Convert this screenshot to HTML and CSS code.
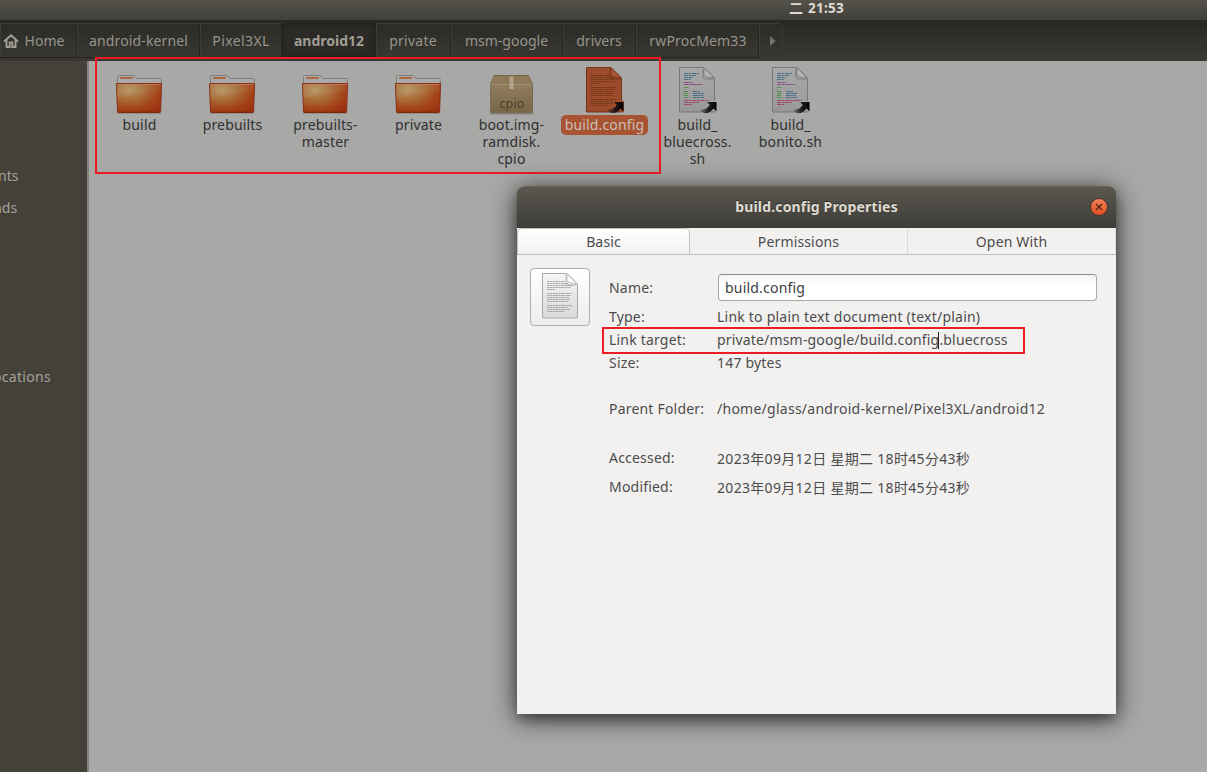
FILE: index.html
```
<!DOCTYPE html>
<html lang="en">
<head>
<meta charset="utf-8">
<title>build.config Properties</title>
<link rel="stylesheet" href="styles.css">
</head>
<body>
<svg class="defs" aria-hidden="true">
  <defs>
    <radialGradient id="orange" cx=".28" cy=".22" r=".95">
      <stop offset="0" stop-color="#b5925f"/><stop offset=".35" stop-color="#a96e3a"/>
      <stop offset=".7" stop-color="#a44318"/><stop offset="1" stop-color="#9b3010"/>
    </radialGradient>
    <linearGradient id="box" x1="0" y1="0" x2="0" y2="1">
      <stop offset="0" stop-color="#968464"/><stop offset="1" stop-color="#796747"/>
    </linearGradient>
    <linearGradient id="paper" x1="0" y1="0" x2="0" y2="1">
      <stop offset="0" stop-color="#aaa"/><stop offset="1" stop-color="#989898"/>
    </linearGradient>
    <linearGradient id="sheet" x1="0" y1="0" x2="0" y2="1">
      <stop offset="0" stop-color="#f6f6f6"/><stop offset="1" stop-color="#d9d9d9"/>
    </linearGradient>
    <linearGradient id="arrow" x1="0" y1="0" x2="1" y2="0">
      <stop offset="0" stop-color="#222" stop-opacity=".25"/><stop offset=".5" stop-color="#111" stop-opacity=".9"/><stop offset="1" stop-color="#000"/>
    </linearGradient>
    <symbol id="folder" viewBox="0 0 48 48">
      <path d="M2 46.500h44" stroke="#777" stroke-opacity=".5"/>
      <path d="M2.500 18V9.500q0-1 1-1H18.500q1 0 1.600.9l2 2.100H45.500q.8 0 .8.8V18z" fill="#aaa" stroke="#7d7d7d"/>
      <rect x="5" y="10" width="13" height="2" rx=".8" fill="#ad6842"/>
      <path d="M1.500 16.500h45l-.9 28.200q0 .8-.8.8H3.300q-.8 0-.8-.8z" fill="url(#orange)" stroke="#8b2c14"/>
      <path d="M2.500 17.500h43" stroke="#bd8465" stroke-opacity=".7"/>
      <path d="M2 17h44l-.2 7Q24 25 2.400 32z" fill="#fff" fill-opacity=".06"/>
      <path d="M3 45.200h42" stroke="#832209"/>
    </symbol>
    <symbol id="package" viewBox="0 0 48 48">
      <path d="M2.500 46.500h44" stroke="#777" stroke-opacity=".6" stroke-width="2"/>
      <path d="M7 8.500h34.500l4 8.500v28q0 .8-.8.8H4.500q-.8 0-.8-.8V17z" fill="url(#box)" stroke="#75684f"/>
      <path d="M7.300 9h33.900l3.600 7.800H4.200z" fill="#8c7a58"/>
      <path d="M4.200 17.500h40.500" stroke="#a6977a" stroke-opacity=".7"/>
      <path d="M22.500 9.500h4v12.500h-4z" fill="#b8ac93" fill-opacity=".85"/>
      <text x="25" y="41" text-anchor="middle" class="package-text">cpio</text>
    </symbol>
    <symbol id="link" viewBox="0 0 17 13">
      <path d="M7 1h9.500v9.500l-3-3Q9.500 12.500 5 12.300 1.500 11.500 0 8.500 6 9.500 9.800 4z" fill="url(#arrow)"/>
    </symbol>
    <symbol id="script" viewBox="0 0 48 48">
      <path d="M6.500.5h24.500l10.500 10.500v34H6.500z" fill="url(#paper)" stroke="#777"/>
      <g fill="none" stroke-width="1" stroke-dasharray="4 .5 3 .5">
        <path stroke="#486f87" d="M11 6.500h15M11 8.500h12M11 10.500h9M11 12.500h7M20 24.500h7M20 26.500h11M20 28.500h10M20 30.500h11"/>
        <path stroke="#875081" d="M11 15.500h9M11 17.500h18"/>
        <path stroke="#568c4d" d="M11 20.500h5M11 22.500h1M11 24.500h4M11 26.500h5M11 28.500h4M11 30.500h5"/>
        <path stroke="#9b4967" d="M11 33.500h25M11 35.500h15M11 37.500h8"/>
      </g>
      <path d="M31 1v6q0 2.500 4 3l6 1z" fill="#b7b7b7" stroke="#777" stroke-width=".7"/>
      <path d="M30 2v7q0 3 5 3h5" fill="none" stroke="#555" stroke-opacity=".3" stroke-width="2"/>
      <path d="M33 34h11v12l-4-3z" fill="#aaa"/>
      <use href="#link" x="27" y="34" width="17" height="13"/>
    </symbol>
    <symbol id="textfile" viewBox="0 0 48 48">
      <path d="M6.500.5h24.500l10.500 10.500v34H6.500z" fill="#9c4b2b" stroke="#713319"/>
      <path d="M11 8.500h21M11 10.500h23M11 12.500h23M11 14.500h24M11 16.500h8M11 20.500h25M11 22.500h24M11 24.500h22M11 26.500h23M11 28.500h21M11 32.500h25M11 34.500h24M11 36.500h22M11 38.500h17" stroke="#773619" stroke-dasharray="2 .4 3 .4"/>
      <path d="M31 1v6q0 2.500 4 3l6 1z" fill="#ad5734" stroke="#773619" stroke-width=".7"/>
      <path d="M30 2v7q0 3 5 3h5" fill="none" stroke="#642a13" stroke-opacity=".4" stroke-width="2"/>
      <path d="M33 34h11v12l-4-3z" fill="#a84e2c"/>
      <use href="#link" x="27" y="34" width="17" height="13"/>
    </symbol>
    <symbol id="document" viewBox="0 0 48 48">
      <path d="M6.500.5h24.500l10.500 10.500v34H6.500z" fill="url(#sheet)" stroke="#aaa"/>
      <path d="M11 8.500h18M11 10.500h21M11 12.500h25M11 14.500h24M11 16.500h8M11 20.500h25M11 22.500h24M11 24.500h22M11 26.500h23M11 28.500h21M11 32.500h25M11 34.500h21M11 36.500h23M11 38.500h17" stroke="#aaa" stroke-dasharray="2 .4 3 .4"/>
      <path d="M31 1v6q0 2.500 4 3l6 1z" fill="#fff" stroke="#aaa" stroke-width=".7"/>
      <path d="M30 2v7q0 3 5 3h5" fill="none" stroke="#777" stroke-opacity=".25" stroke-width="2"/>
    </symbol>
  </defs>
</svg>

<div class="desktop">
  <header class="panel"><span class="clock"><span class="weekday">二</span><span class="time">21:53</span></span></header>

  <nav class="toolbar">
    <a class="crumb home">
      <svg width="16" height="14" viewBox="0 0 16 14"><path d="M1 7.500 8 1.300l7 6.200M3.500 6v7h3.200V8.500h2.600V13h3.200V6" fill="none" stroke="#a3a097" stroke-width="1.900"/></svg>
      <span>Home</span>
    </a>
    <a class="crumb kernel">android-kernel</a>
    <a class="crumb pixel">Pixel3XL</a>
    <a class="crumb current">android12</a>
    <a class="crumb private">private</a>
    <a class="crumb msm">msm-google</a>
    <a class="crumb drivers">drivers</a>
    <a class="crumb procmem">rwProcMem33</a>
    <a class="crumb next"><svg width="6" height="10" viewBox="0 0 6 10"><path d="M0 0l5.500 5L0 10z" fill="#77756f"/></svg></a>
  </nav>

  <div class="body">
    <aside class="sidebar">
      <div class="place documents">nts</div>
      <div class="place downloads">ads</div>
      <div class="place locations">ocations</div>
    </aside>
    <main class="files">
      <div class="file"><svg class="icon"><use href="#folder"/></svg><span class="label">build</span></div>
      <div class="file"><svg class="icon"><use href="#folder"/></svg><span class="label">prebuilts</span></div>
      <div class="file"><svg class="icon"><use href="#folder"/></svg><span class="label">prebuilts-<br>master</span></div>
      <div class="file"><svg class="icon"><use href="#folder"/></svg><span class="label">private</span></div>
      <div class="file"><svg class="icon"><use href="#package"/></svg><span class="label">boot.img-<br>ramdisk.<br>cpio</span></div>
      <div class="file selected"><svg class="icon"><use href="#textfile"/></svg><span class="label">build.config</span></div>
      <div class="file"><svg class="icon"><use href="#script"/></svg><span class="label">build_<br>bluecross.<br>sh</span></div>
      <div class="file"><svg class="icon"><use href="#script"/></svg><span class="label">build_<br>bonito.sh</span></div>
    </main>
  </div>

  <div class="mark mark-files"></div>

  <section class="dialog">
    <header class="titlebar">
      <h1 class="title">build.config Properties</h1>
      <button class="close" aria-label="Close"><svg width="8" height="8" viewBox="0 0 8 8"><path d="M1 1l6 6M7 1 1 7" stroke="#4c2417" stroke-width="1.300"/></svg></button>
    </header>
    <div class="tabs">
      <div class="tab active">Basic</div>
      <div class="tab permissions">Permissions</div>
      <div class="tab openwith">Open With</div>
    </div>
    <div class="content">
      <button class="preview" aria-label="Icon"><svg class="icon"><use href="#document"/></svg></button>
      <dl class="props">
        <dt class="name">Name:</dt><dd class="entry">build.config</dd>
        <dt class="type">Type:</dt><dd class="type type-value">Link to plain text document (text/plain)</dd>
        <dt class="target">Link target:</dt><dd class="target-value"><span>private/msm-google/build.config<i class="caret"></i>.bluecross</span></dd>
        <dt class="size">Size:</dt><dd class="size-value">147 bytes</dd>
        <dt class="parent">Parent Folder:</dt><dd class="parent parent-value">/home/glass/android-kernel/Pixel3XL/android12</dd>
        <dt class="accessed">Accessed:</dt><dd class="accessed date">2023年09月12日 星期二 18时45分43秒</dd>
        <dt class="modified">Modified:</dt><dd class="modified date">2023年09月12日 星期二 18时45分43秒</dd>
      </dl>
    </div>
    <div class="mark mark-target"></div>
  </section>
</div>
</body>
</html>
```
FILE: styles.css
```
* { box-sizing: border-box; }
body {
  margin: 0;
  overflow: hidden;
  font: 14px/17px "Noto Sans", "Noto Sans CJK SC", sans-serif;
  color: #4c4c4c;
}
button { padding: 0; }
.defs { position: absolute; width: 0; height: 0; }
.desktop {
  position: relative;
  display: flex;
  flex-direction: column;
  width: 1207px;
  height: 772px;
  overflow: hidden;
}

/* Top panel */
.panel {
  height: 20px;
  padding-left: 789px;
  background: linear-gradient(#55524a, #403f3a);
}
.clock {
  display: flex;
  align-items: center;
  gap: 5px;
  height: 16px;
  color: #dfdbd2;
  font-weight: 700;
}
.weekday { font-size: 14px; line-height: 14px; }
.time { font-size: 13.500px; letter-spacing: .25px; }

/* Path bar */
.toolbar {
  display: flex;
  height: 41px;
  padding: 3px 0 3px;
  background: linear-gradient(#272822, #3a3833);
  border-bottom: 2px solid #3a3833;
}
.crumb {
  display: flex;
  align-items: center;
  justify-content: center;
  height: 35px;
  border-top: 1px solid #393b34;
  border-bottom: 1px solid #24231f;
  border-right: 1px solid #242520;
  box-shadow: inset 1px 0 #3d3d38;
  background: linear-gradient(#2b2c27, #393732);
  color: #98958c;
}
.home { width: 77px; gap: 6px; padding-right: 9px; }
.kernel { width: 123px; padding-left: 1px; letter-spacing: .14px; }
.pixel { width: 82px; padding-left: 1px; letter-spacing: .4px; }
.current {
  width: 94px;
  padding-left: 1px;
  background: #2c2a26;
  border-color: #22231e;
  box-shadow: inset 0 0 4px #1d1d19;
  font-weight: 700;
  color: #a19e95;
}
.private { width: 75px; letter-spacing: .25px; }
.msm { width: 112px; }
.drivers { width: 73px; }
.procmem { width: 123px; padding-left: 2px; letter-spacing: .15px; }
.next { width: 24px; border-color: #3b3a35; border-radius: 0 5px 5px 0; }
.next svg { margin-left: 4px; }

/* Window body */
.body { display: flex; flex: 1; }
.sidebar {
  width: 89px;
  padding-top: 98px;
  background: #44403a;
  border-right: 2px solid #85837f;
  color: #a5a298;
}
.place { height: 32px; line-height: 34px; }
.documents { text-indent: -2px; }
.downloads { text-indent: -6px; }
.locations { margin-top: 137px; text-indent: -7px; letter-spacing: .3px; }
.files {
  display: flex;
  flex: 1;
  align-items: flex-start;
  padding: 6px 0 0 4px;
  background: #a8a8a6;
}
.file {
  display: flex;
  flex: none;
  flex-direction: column;
  align-items: center;
  width: 93px;
  text-align: center;
  color: #303030;
  letter-spacing: .15px;
}
.icon { width: 48px; height: 48px; }
.file .icon { margin-right: 2px; }
.package-text { font: 12.500px "Noto Sans", sans-serif; fill: #4b402c; }
.label { padding: 1px 4px 2px; border-radius: 5px; }
.selected .label { background: #a85331; color: #c9c0b8; }

/* Red annotation frames */
.mark { position: absolute; border: 2px solid #ed1c24; }
.mark-files { left: 95px; top: 57px; width: 566px; height: 117px; }
.mark-target { left: 85px; top: 141px; width: 423px; height: 27px; }

/* Properties dialog */
.dialog {
  position: absolute;
  left: 517px;
  top: 186px;
  width: 599px;
  height: 528px;
  border-radius: 7px 7px 0 0;
  background: #f2f1f0;
  box-shadow: 0 4px 28px rgba(0, 0, 0, .65), 0 5px 12px rgba(0, 0, 0, .35);
}
.titlebar {
  display: grid;
  grid-template-columns: 1fr auto;
  align-items: center;
  height: 42px;
  padding: 0 8px 1px 26px;
  border-radius: 7px 7px 0 0;
  border-top: 1px solid #65625a;
  background: linear-gradient(#5a574e, #3e3d39);
}
.title {
  margin: 0 0 2px;
  text-align: center;
  font-size: 14px;
  font-weight: 700;
  letter-spacing: .17px;
  color: #dfdbd2;
  text-shadow: 0 -1px #2c2b28;
}
.close {
  display: grid;
  place-items: center;
  width: 18px;
  height: 18px;
  border: 1px solid #49362e;
  border-radius: 50%;
  background: linear-gradient(#f58056, #df4f22);
}
.tabs { display: flex; height: 27px; border-bottom: 1px solid #bebdbb; }
.tab { text-align: center; line-height: 27px; letter-spacing: .15px; }
.active {
  width: 173px;
  border: 1px solid #c2c1bf;
  border-bottom: 0;
  border-radius: 5px 5px 0 0;
  background: linear-gradient(#fff, #f2f1f0);
  line-height: 25px;
}
.permissions { width: 218px; border-right: 1px solid #dcdbd9; }
.openwith { width: 208px; border-right: 1px solid #dcdbd9; }
.content { display: flex; padding: 13px 19px 0 13px; }
.preview {
  display: grid;
  place-items: center;
  width: 60px;
  height: 58px;
  border: 1px solid #b1afad;
  border-radius: 4px;
  background: linear-gradient(#fff, #eeedeb);
}
.props {
  display: grid;
  grid-template-columns: 108px 380px;
  grid-template-rows: 33px 24px 23px 23px 23px 23px 23px 29px 29px;
  align-items: center;
  margin: 3px 0 0 19px;
  white-space: nowrap;
  letter-spacing: .2px;
}
.props dt { grid-column: 1; }
.props dd { grid-column: 2; margin: 0; }
.props .entry {
  height: 27px;
  margin-left: 1px;
  padding: 0 6px;
  border: 1px solid #a9a7a4;
  border-top-color: #8e8c89;
  border-radius: 4px;
  background: linear-gradient(#f3f3f3, #fff 35%);
  line-height: 26px;
  color: #3c3c3c;
}
.props .type { padding-top: 1px; }
.type-value { letter-spacing: .22px; }
.target-value { letter-spacing: .17px; }
.parent { grid-row: 6; }
.parent-value { letter-spacing: .26px; }
.accessed { grid-row: 8; }
.modified { grid-row: 9; }
.date { padding-top: 1px; letter-spacing: .31px; }
.caret {
  display: inline-block;
  width: 1px;
  height: 17px;
  margin: 0 0 0 -1px;
  vertical-align: -4px;
  background: #222;
}
```
